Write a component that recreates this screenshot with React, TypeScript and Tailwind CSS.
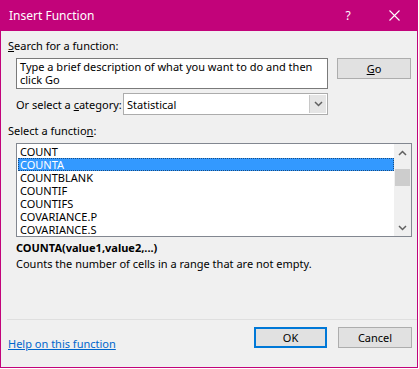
import React from "react";

const items = ["COUNT", "COUNTA", "COUNTBLANK", "COUNTIF", "COUNTIFS", "COVARIANCE.P", "COVARIANCE.S"];

function Chevron({ dir }: { dir: "up" | "down" }) {
  return (
    <svg width="9" height="6" viewBox="0 0 9 6">
      <path
        d={dir === "up" ? "M1 5 L4.5 1.5 L8 5" : "M1 1 L4.5 4.5 L8 1"}
        fill="none"
        stroke="#606060"
        strokeWidth="1.5"
      />
    </svg>
  );
}

export default function App() {
  return (
    <div
      className="w-[418px] h-[368px] flex flex-col border-x border-b border-[#c2037a] bg-[#f0f0f0] text-[11px] leading-[15px] text-black"
      style={{ fontFamily: '"Noto Sans", "Open Sans", sans-serif' }}
    >
      {/* title bar */}
      <div className="h-[31px] bg-[#c2037a] text-white text-[12px] flex items-center pl-[8px] shrink-0">
        <span className="flex-1">Insert Function</span>
        <span className="w-[46px] text-center">?</span>
        <span className="w-[46px] flex justify-center">
          <svg width="11" height="11" viewBox="0 0 11 11">
            <path d="M0.5 0.5 L10.5 10.5 M10.5 0.5 L0.5 10.5" stroke="white" strokeWidth="1.1" />
          </svg>
        </span>
      </div>

      <div className="flex-1 flex flex-col pt-[7px]">
        <div className="pl-[7px]">
          <span className="underline">S</span>earch for a function:
        </div>

        <div className="flex mt-[5px] pl-[15px]">
          <div className="w-[312px] h-[31px] bg-white border border-[#7a7a7a] px-[3px] pt-[1px] leading-[13px]">
            Type a brief description of what you want to do and then click Go
          </div>
          <button className="ml-[9px] w-[74px] h-[21px] bg-[#e1e1e1] border border-[#adadad] flex items-center justify-center">
            <span>
              <span className="underline">G</span>o
            </span>
          </button>
        </div>

        <div className="flex items-center mt-[4px] pl-[15px]">
          <span className="w-[107px]">
            Or select a <span className="underline">c</span>ategory:
          </span>
          <div className="w-[205px] h-[22px] bg-white border border-[#acacac] flex">
            <span className="flex-1 pl-[3px] flex items-center">Statistical</span>
            <span className="w-[17px] m-[1px] bg-[#e5e5e5] border-l border-[#c8c8c8] flex items-center justify-center">
              <Chevron dir="down" />
            </span>
          </div>
        </div>

        <div className="pl-[7px] mt-[8px]">
          Select a functio<span className="underline">n</span>:
        </div>

        <div className="ml-[15px] mt-[5px] w-[396px] h-[94px] bg-white border border-[#828790] flex">
          <div className="flex-1 pt-[1px] pl-[1px]">
            {items.map((it) => (
              <div
                key={it}
                className={
                  it === "COUNTA"
                    ? "h-[13px] leading-[13px] pl-[2px] bg-[#3399ff] text-white outline outline-1 outline-dotted outline-[#1a4d80] -outline-offset-1"
                    : "h-[13px] leading-[13px] pl-[2px]"
                }
              >
                {it}
              </div>
            ))}
          </div>
          <div className="w-[17px] bg-[#f0f0f0] flex flex-col items-center">
            <div className="h-[17px] flex items-center justify-center">
              <Chevron dir="up" />
            </div>
            <div className="mt-[8px] w-[15px] h-[17px] bg-[#cdcdcd]" />
            <div className="flex-1" />
            <div className="h-[17px] flex items-center justify-center">
              <Chevron dir="down" />
            </div>
          </div>
        </div>

        <div className="pl-[15px] mt-[3px] font-bold">COUNTA(value1,value2,...)</div>
        <div className="pl-[15px] mt-[1px]">Counts the number of cells in a range that are not empty.</div>

        <div className="flex-1" />

        <div className="ml-[6px] border-t border-[#dfdfdf] pt-[4px] pb-[16px] flex items-center">
          <a href="#" className="ml-[1px] mt-[12px] text-[#0066cc] underline flex-1">
            Help on this function
          </a>
          <button className="w-[73px] h-[21px] bg-[#e1e1e1] border-2 border-[#0078d7]">OK</button>
          <button className="ml-[11px] mr-[5px] w-[74px] h-[21px] bg-[#e1e1e1] border border-[#adadad]">Cancel</button>
        </div>
      </div>
    </div>
  );
}
